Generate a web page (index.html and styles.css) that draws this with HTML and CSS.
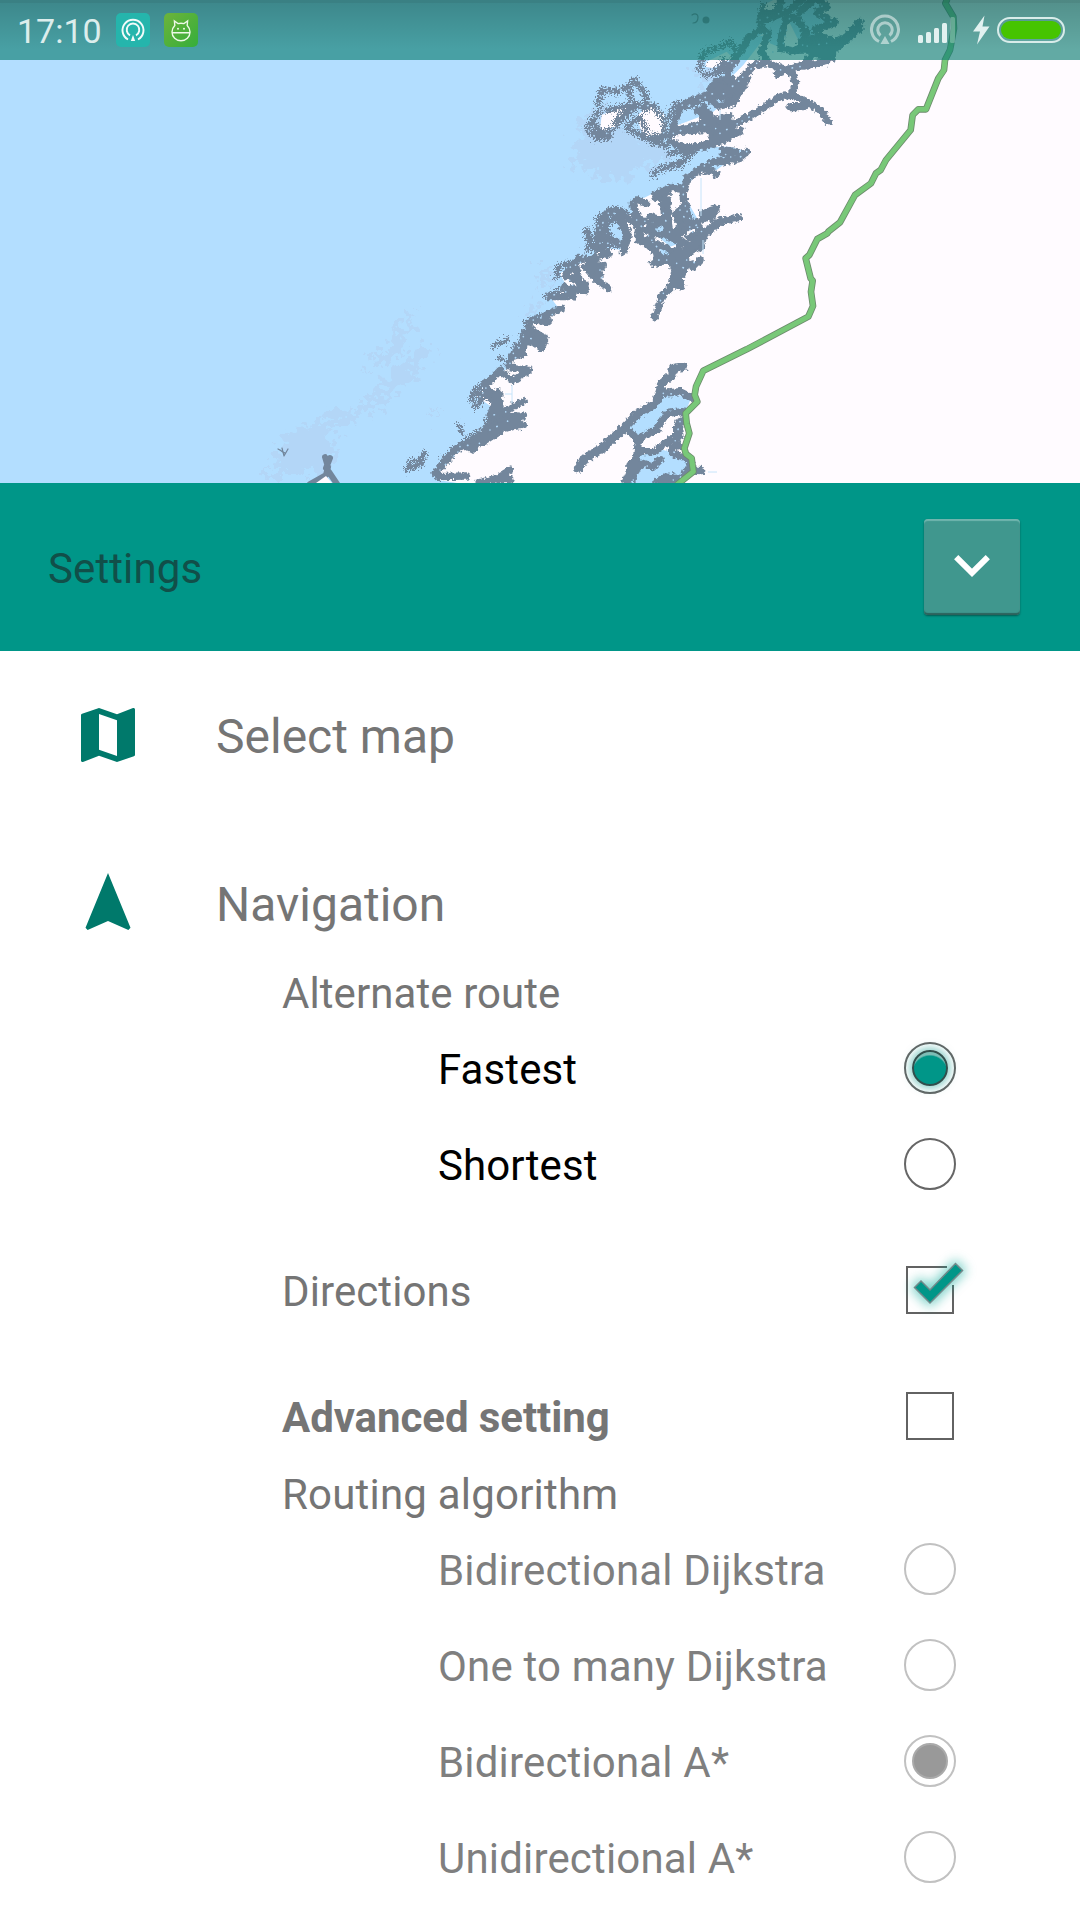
FILE: index.html
```html
<!DOCTYPE html>
<html lang="en">
<head>
<meta charset="utf-8">
<title>Settings</title>
<link rel="stylesheet" href="styles.css">
</head>
<body>
<main class="screen">
  <section class="map">
    <svg class="map-canvas" width="1080" height="483" viewBox="0 0 1080 483">
      <defs>
        <filter id="rough" x="-5%" y="-5%" width="110%" height="110%">
          <feTurbulence type="fractalNoise" baseFrequency=".1" numOctaves="2" seed="4"/>
          <feDisplacementMap in="SourceGraphic" scale="18" xChannelSelector="R" yChannelSelector="G"/>
        </filter>
        <filter id="rugged" x="-5%" y="-5%" width="110%" height="110%">
          <feTurbulence type="fractalNoise" baseFrequency=".22" numOctaves="2" seed="9"/>
          <feDisplacementMap in="SourceGraphic" scale="38" xChannelSelector="R" yChannelSelector="G"/>
        </filter>
        <filter id="wash" x="-10%" y="-10%" width="120%" height="120%">
          <feTurbulence type="fractalNoise" baseFrequency=".12" numOctaves="3" seed="3"/>
          <feDisplacementMap in="SourceGraphic" scale="38" xChannelSelector="R" yChannelSelector="G"/>
        </filter>
      </defs>
      <rect width="1080" height="483" class="sea"/>

      <!-- shallow water -->
      <g class="shoal" filter="url(#wash)">
        <path d="M262 475l14-18 12-25 22-6 20-15 22-2 18-12 20-24 14-12 22-20 6 10-14 22-20 20-20 14-30 16-18 8 8 18-10 18-24 8z"/>
        <path d="M368 372l6-20 14-6 12-18 10-14 8-4-8 20-8 22-16 10z"/>
        <path d="M572 170l10-50 20-14 30 26 34 8 4 26-30 2-20 14-22-6-12-8z"/>
        <path d="M536 276l12-10 8 6-16 14zM404 350l6-4M524 310l10-8 4 6-12 14zM430 415l8-8 2 8zM696 70l14-8 6 12-14 12z"/>
      </g>

      <!-- mainland and islands -->
      <g transform="translate(540 0) scale(.33333)">
        <path class="land" d="M1620-10H860L840 40 885 70 825 95 880 150 820 130 790 150 740 50 715 140 690 130 680 95 640 120 590 190 575 230 540 265 580 285 520 335 400 380 395 430 490 440 570 440 620 455 570 480 530 510 480 515 435 560 340 580 280 610 300 650 240 640 180 690 170 760 120 790 60 820 80 860 30 890 60 930-30 975-40 1030-75 1060-90 1100-120 1120-160 1145-190 1190-130 1230-170 1290-270 1370-315 1420-305 1440-180 1460H1620z"/>
        <path class="land" d="M180 390l5-45 100-40 10 5-60 65-40 20zM290 350l40-40 40 30 10 40-20 25-50 5zM500 185l60-30 20 20-60 30-25-5zM660 20l40-20h30l-20 30-40 20z"/>
        <path class="sea" d="M610 150l40-40 30-5-70 90-30 30-10-20zM445 540l45-70 70-28 60 12-60 30-80 30-45 25zM820-5l-60 45 50 50 10-40zM330 640l40 20 10 40 40 30-30 10-60-50zM440 600l40 70-40 20zM890 140l70-70-60 70zM180 670l60-10 20 40-20 50-60-10z"/>
      </g>
      <g transform="translate(400 200) scale(.33333)">
        <path class="sea" d="M680 690l60-60 50-50 85 10-20 50-60 5-40 60-45 20zM700 770l90-20 70 20 25 40-40 40H680zM595 90l60-25 20 50-60 15zM780 130l60 50-20 20-40-40z"/>
      </g>
      <path class="coast" d="M310 484l16-9 2-8-3-10m4 15 8 12M326 468l4-10"/>
      <path class="land" d="M316 483l10-7 6 7z"/>

      <!-- coastline, northern half -->
      <g transform="translate(540 0) scale(.33333)">
        <g class="coast" filter="url(#rough)">
          <path class="mass" d="M515 290l10-50 50-10 20 30-20 40zM765 155l50-45 70 30-5 40-60-25zM400 390l170-40-20 40-140 10zM515 370l40 10-15 25-30 30zM340 600l20-15 30-10-20 20zM400 640l40-30 10 30-20 60zM440 710l60-20-20 50z"/>
          <path d="M790-5l-40 35-50 20-40 15 12-28 40 8 12-45M780 35l50-42 30 25-30 20 55 30-60 20 10 20 45 15M960 65l-40 45-50 25M960 85l-60 50-40 30-40-20-50 5 30-50-30-45-30 0-15 50-2 40 38 8M860 170l-40-10-30 35-50 15-55-20-20-35 20-55-20-15-40 30-30 50-30 45-5 30"/>
          <path d="M860 185l-80 15-40 10-30 12M755 215l12 35-12 30M685 188l-40 5-40 40-35 40-50-20-20 40 40 25 40-10 40-70"/>
          <path d="M395 395L570 350l-30 40 90-40 90-60 40-5 80 45 25 35M540 400l60-8M750 320l40 0M400 380l20-60 40-20 80-30M470 330l60 60M490 320l20 30M540 400l-30 30-60 15-50-15M520 380l20 30M600 395l-50 25-60 20"/>
          <path d="M620 455l-30 25-40-20M570 482l-30 5-20-5-30 25 40 15M490 500l-50 35-5 30-40-3-50 22M590 455l-40-5"/>
          <path d="M430 560v40l20 60 40 40-30 45-40-25-30-20-10-60-5-45M385 600l-5 60 10 45 50-35M485 640l40-12-10 25 M480 745l15-50 50-30 50-12M280 610l10 50 60 10 15-8M300 660v60l60 15 40 20M330 680l0 30 20 30M290 600l30 10M245 640l40 30M240 655l20 60-10 40M370 610l10 90"/>
        </g>
        <g class="coast ragged" filter="url(#rugged)">
          <path d="M480 210l10-50 50-20 30-15 20 30-15 35-40 30-40 5M550 180l20 30M660 60l10-45M700 50l20-50M530 210l20-20"/>
          <path d="M175 310l10-40 50 5 30-15 10 50 45 20-5-50-30-40-20 20M180 330l-40 55 30 30 40-5M200 400l90-80M230 360l60-50M160 370l20 20M150 400l60-5M260 380l40-30 20 40M300 320l40-5 35 50-5 40-50 10-60-30M320 410l60 30 20-40M380 360l30-50 30 10 50-20M200 330l80-15M390 460l60-20M340 430l50-30"/>
          <path d="M340 525l20-20 60-10 40-40M355 510l70-25M430 460l20-10"/>
          <path d="M170 700l10-50 50-20 30 10-40 15-30 15 10 50-30 20M140 690l15 30M190 660l20 80M170 740l70-10"/>
        </g>
        <g class="speckle">
          <path d="M480 210l10-50 50-20 30-15 20 30-15 35M175 310l10-40 50 5 30-15 10 50M180 330l-40 55 30 30M200 400l90-80M300 320l40-5 35 50-5 40M380 360l30-50 30 10 100-50M340 525l20-20 60 0M620 455l-30 25-40-20-60 40M430 560v40l20 60 40 40-30 45M280 610l10 50 60 10M300 660v60l60 15M170 700l10-50 50-20M860 130l-70 10-40-90-20 80M780 200l-60 10M650 190l-50 50-60 50M400 400l80-30 60 20M540 400l90-50M680 100l20 60M860 0l-30 40 50 30M660 60l60-20 30-30"/>
        </g>
      </g>

      <!-- coastline, southern half -->
      <g transform="translate(400 200) scale(.33333)">
        <g class="coast" filter="url(#rough)">
          <path class="mass" d="M250 690l20-30 50-20 50 5-10 25-60 20-60 40-40 10zM800 170l40-20 20 50-25 60-25 0 10-50zM550 200l45 0 10 30-30 0zM385 400l50 10-10 30-40-10zM275 600l20-30 10 50zM690 800l20-40 10 40-20 40-30 5zM765 845l30-20 50 10-30 15zM825 680l10-20 10 50-20 20z"/>
          <path d="M660 45l25 60-10 35-40-20-30-10M600 90l-10 50 35 20-60 20-30-5-40 50 60 30 0 20-50-10M525 190l20 80M560 200l40 10-10 30 35 25M580 195l30 0M490 260l30 30M450 290l50 0M485 325l-50 20 10 20-50-5M390 380l-20 30 45 20 10 15 10-30-35-20M380 410l-10 30-30 20M370 460l-35 10-10 30 60 10M385 512l-45 30-40-30-30 30-15 10M260 545l0 30 20 25M270 580l30 5-30 60 40-10 60-30M290 610l10 20M370 645l-60 30-60 15M370 675l-60 10-60 40-30 0M250 700l-30 50-30-15-30 20M150 770l-45 50 10 10 85-2M230 850l60-15 40-25M290 840l40-2"/>
          <path d="M700 20l20 50-5 50 50 20 10 45 50-20 20-40-50-20-30-5M740 90l50-30-40-10M800 30l5 70M840 30l30 50-30 20M870 80l70-40 10-15-30 15M960 60l-60 60-50 60M760 190l40-10 35 10-10 60-40 40-20 60M830 210l15 50M850 180l30 20 20-20M730 120l60 60M840 170l30-30"/>
          <path class="wide" d="M850 500l-30 5-5 20-30 25-5 30-15 30-50 30-60 60-50 45-50 30-20 30M620 738l-50 30"/>
          <path d="M670 690l-20 20-50 30M680 685l20 20 15 20-5 50-20 20-5 50M790 580l50-5 40 20M850 635l-50 5-30 50-45 20-10 20M845 660l-20 60 10 20M720 755l40 0 30-20 20-15M815 740l0 20 50 15 10 35 30 2M700 810l30-20 30 10 20-20M780 840l40-10M850 830l10-20"/>
        </g>
        <g class="coast ragged" filter="url(#rugged)">
          <path d="M600 60l30-30 40 5-20 20-40 20 20 40M560 100l10 30 20 20M560 150l30-20M470 230l5-30 30-10M440 290l40-15M380 370l40-20M370 400l30-10M345 440l20-10M220 580l10-10 15 30-20 20M240 600l20-20M215 600l10-30 20-10M260 660l60-10M200 720l30-20M130 780l60-50M160 750l50-20M250 580l30 20"/>
        </g>
        <g class="coast ragged thin" filter="url(#rugged)">
          <path d="M280 440l15-10 20-5 8-8M298 475l12 5M175 675l10 20M20 810l15-30 20 5 20-30-10 35-30 15"/>
        </g>
        <g class="speckle">
          <path d="M600 90l20-50 40 0M600 130l70 0M560 150l-20 40-50 20 30 50M600 210l10 40M440 290l60-15M400 360l70-20M370 410l40 10M340 460l30-30M330 490l30-30M240 590l-10 20 30-50M260 650l60-15M270 690l60-30M180 740l60-10M120 810l60-60M800 180l-30 0M830 190l30 20M790 280l-20 50M860 180l30 10M710 60l60 80M790 40l20 60M840 30l40 70M870 90l40-30M700 840l60-60M840 665l-15 60M800 750l50 15M790 580l70 5M730 700l50-50M820 840l40-15"/>
        </g>
      </g>
      <path class="coast fine" d="M278 449l7 4m-3-5 2 8 4-7m-8 1 4 3M692 15c3-2 6-1 6 2s-1 6-5 6"/>
      <circle cx="706" cy="20" r="3.5" class="rock"/>
      <path class="grid-line" d="M701 178v38M703 240v14M512 385v18M505 394h7M720 110v10M708 472h9"/>

      <!-- route -->
      <g class="route" transform="translate(690 60) scale(.33333)">
        <path id="route" d="M772-183L766-170 790-130 792-95 780-30 765 0 762 30 745 55 708 148 685 148 668 165 662 210 588 300 572 330 558 340 543 370 495 405 450 487 415 515 412 520 382 537 358 585 347 595 362 655 368 662 363 695 369 738 355 770 170 868 40 932 18 980 14 1005 22 1025-13 1060-10 1090-2 1120-17 1165-12 1182 5 1195 10 1235-40 1275"/>
        <use href="#route" class="route-fill"/>
      </g>
    </svg>

    <header class="status-bar">
      <div class="status-left">
        <span class="clock">17:10</span>
        <svg class="app-icon" width="34" height="34" viewBox="0 0 34 34">
          <rect width="34" height="34" rx="5" fill="#25b5ac"/>
          <path d="M12 26.500A10.500 10.500 0 1 1 22 26.500M14 22.300A6.300 6.300 0 1 1 20 22.300" fill="none" stroke="#f2fbfa" stroke-width="1.900"/>
          <path d="M17 22l2.200 6h-4.400z" fill="#f2fbfa"/>
        </svg>
        <svg class="app-icon" width="34" height="34" viewBox="0 0 34 34">
          <defs><linearGradient id="leaf" x2="1" y2="1"><stop stop-color="#6db33b"/><stop offset="1" stop-color="#35ae3b"/></linearGradient></defs>
          <rect width="34" height="34" rx="5" fill="url(#leaf)"/>
          <path d="M10.800 12.500L10.400 8l3.600 2.600q3-.7 6 0L23.600 8l-.4 4.500q2.800 2.800 2.800 6.500c0 5-4 8.800-9 8.800s-9-3.800-9-8.800q0-3.700 2.800-6.500zM8 19.800h18" fill="none" stroke="#eef9e8" stroke-width="1.400"/>
          <circle cx="14" cy="15.700" r="1" fill="#eef9e8"/><circle cx="20" cy="15.700" r="1" fill="#eef9e8"/>
        </svg>
      </div>
      <svg class="status-right" width="200" height="34" viewBox="0 0 200 34">
        <g opacity=".5"><path d="M9 28.500A13.500 13.500 0 1 1 21 28.500M10.500 22.500A7.200 7.200 0 1 1 19.500 22.500" fill="none" stroke="#fff" stroke-width="3"/><path d="M15 23l4.500 8h-9z" fill="#fff"/></g>
        <g fill="#e2f1f0"><rect x="48" y="22" width="5" height="8" rx="1.500"/><rect x="56" y="19" width="5" height="11" rx="1.500"/><rect x="64" y="15" width="5" height="15" rx="1.500"/><rect x="72" y="10" width="5" height="20" rx="1.500"/><rect x="80" y="4" width="5" height="26" rx="1.500" opacity=".3"/><path d="M114.500 2.500l-11.500 16h7l-3 13 12.500-18h-7z"/></g>
        <rect x="128" y="5" width="66" height="24" rx="12" fill="none" stroke="#d9ecea" stroke-width="2"/>
        <rect x="131" y="8" width="60" height="18" rx="9" fill="#46c400"/>
      </svg>
    </header>
  </section>

  <section class="title-bar">
    <h1 class="title">Settings</h1>
    <button class="collapse" aria-label="Collapse">
      <svg width="36" height="22" viewBox="0 0 36 22"><path d="M2.200 2.200L18 17.800 33.800 2.200" fill="none" stroke="#fff" stroke-width="6"/></svg>
    </button>
  </section>

  <section class="settings">
    <div class="entry">
      <svg class="entry-icon" width="72" height="72" viewBox="0 0 24 24"><path d="M20.500 3l-.16.03L15 5.100 9 3 3.360 4.900c-.21.070-.36.250-.36.480V20.500c0 .28.220.5.500.5l.16-.03L9 18.900l6 2.100 5.640-1.900c.21-.07.360-.25.360-.48V3.500c0-.28-.22-.5-.5-.5zM15 19l-6-2.110V5l6 2.110V19z"/></svg>
      <span class="entry-label">Select map</span>
    </div>
    <div class="entry entry-nav">
      <svg class="entry-icon" width="72" height="72" viewBox="0 0 24 24"><path d="M12 2L4.500 20.290l.71.710L12 18l6.790 3 .71-.71z"/></svg>
      <span class="entry-label">Navigation</span>
    </div>

    <div class="caption">Alternate route</div>
    <div class="option"><span class="option-label">Fastest</span><span class="radio radio-on"></span></div>
    <div class="option"><span class="option-label">Shortest</span><span class="radio"></span></div>

    <div class="toggle directions">
      <span class="toggle-label">Directions</span>
      <svg class="check" width="96" height="96" viewBox="0 0 96 96">
        <defs><filter id="glow" x="-50%" y="-50%" width="200%" height="200%"><feGaussianBlur stdDeviation="6"/></filter></defs>
        <path d="M65 25H25v46h46V43" fill="none" stroke="#626262" stroke-width="2"/>
        <path d="M32.500 45.500l6.500-6.500 9 9L73.500 21.500l7 7L48 61z" fill="#00a896" stroke="#00a896" stroke-width="6" opacity=".55" filter="url(#glow)"/>
        <path d="M32.500 45.500l6.500-6.500 9 9L73.500 21.500l7 7L48 61z" fill="#009688" stroke="#72898a" stroke-width="1.500"/>
      </svg>
    </div>
    <div class="toggle advanced">
      <span class="toggle-label strong">Advanced setting</span>
      <span class="box"></span>
    </div>

    <div class="caption caption-wide">Routing algorithm</div>
    <div class="option disabled"><span class="option-label">Bidirectional Dijkstra</span><span class="radio"></span></div>
    <div class="option disabled"><span class="option-label">One to many Dijkstra</span><span class="radio"></span></div>
    <div class="option disabled"><span class="option-label">Bidirectional A*</span><span class="radio radio-on"></span></div>
    <div class="option disabled"><span class="option-label">Unidirectional A*</span><span class="radio"></span></div>
  </section>
</main>
</body>
</html>
```

FILE: styles.css
```css
* { box-sizing: border-box; }

body {
  margin: 0;
  background: #fff;
  font-family: Roboto, "Liberation Sans", sans-serif;
  font-size: 42px;
  color: #757575;
}

.screen {
  display: flex;
  flex-direction: column;
  width: 1080px;
  height: 1920px;
  overflow: hidden;
}

/* Map */
.map { position: relative; height: 483px; flex: none; }
.map-canvas { display: block; }
.sea { fill: #b3deff; }
.land { fill: #fffbff; }
.shoal { fill: #b3d5f6; opacity: .8; }
.coast {
  fill: none;
  stroke: #73869c;
  stroke-width: 22;
  stroke-linecap: round;
  stroke-linejoin: round;
}
.mass { fill: #73869c; stroke-width: 12; }
.wide { stroke-width: 27; }
.ragged { stroke-width: 17; }
.thin { stroke-width: 13; }
.map-canvas > .coast { stroke-width: 6; }
.map-canvas > .fine { stroke-width: 1.2; }
.rock { fill: #73869c; }
.speckle {
  fill: none;
  stroke: #b3d9f8;
  stroke-width: 5;
  stroke-linecap: round;
  stroke-dasharray: 0 23 1 35 0 17;
}
.grid-line { stroke: #c6e4fa; stroke-width: 1; fill: none; }
.route { fill: none; stroke: #6d8b6d; stroke-width: 20; stroke-linejoin: round; }
.route-fill { stroke: #78c878; stroke-width: 15; }

/* Status bar */
.status-bar {
  position: absolute;
  inset: 0 0 auto 0;
  height: 60px;
  padding: 0 10px 0 17px;
  display: flex;
  justify-content: space-between;
  align-items: center;
  background:
    linear-gradient(rgba(0, 0, 0, .2) 0 3px, rgba(0, 0, 0, .15) 3px, rgba(0, 0, 0, 0) 50px),
    rgba(17, 128, 117, .66);
}
.status-left { display: flex; align-items: center; }
.clock {
  width: 99px;
  padding-top: 2px;
  font-size: 34px;
  line-height: 58px;
  color: #dcedec;
}
.app-icon { margin-right: 14px; }

/* Title bar */
.title-bar {
  flex: none;
  height: 168px;
  padding: 0 60px 0 48px;
  display: flex;
  align-items: center;
  justify-content: space-between;
  background: #009688;
}
.title { margin: 3px 0 0; font-size: 42px; font-weight: 400; letter-spacing: .1px; color: #114f49; }
.collapse {
  width: 96px;
  height: 96px;
  padding: 0 0 3px;
  display: flex;
  align-items: center;
  justify-content: center;
  border: 0;
  border-radius: 4px;
  background: #40978e;
  box-shadow: inset 0 2px 1px #70b5ae, inset 0 -2px 1px #2c625c, 0 1px 2px rgba(0, 0, 0, .4);
}

/* Settings list */
.entry {
  display: flex;
  align-items: center;
  height: 168px;
  padding-left: 72px;
}
.entry-nav { height: 147px; padding-top: 21px; }
.entry-icon { fill: #00796b; flex: none; }
.entry-label { margin-left: 72px; font-size: 48px; line-height: 56px; padding-top: 4px; }

.caption { height: 54px; line-height: 56px; padding-left: 282px; letter-spacing: .08px; }
.caption-wide { letter-spacing: .2px; }

.option {
  display: flex;
  align-items: center;
  justify-content: space-between;
  height: 96px;
  padding: 0 124px 0 438px;
  color: #000;
}
.option-label { padding-top: 2px; letter-spacing: .1px; }
.disabled { color: #7f7f7f; }
.disabled .option-label { letter-spacing: .17px; }

.radio {
  width: 52px;
  height: 52px;
  border: 2px solid #666;
  border-radius: 50%;
  display: grid;
  place-items: center;
}
.radio-on::after {
  content: "";
  width: 32px;
  height: 32px;
  border: 2px solid #30504d;
  border-radius: 50%;
  background: radial-gradient(circle at 50% 66%, #009688 64%, #7dbdb6 70%);
  box-shadow: 0 0 9px 2px rgba(0, 150, 136, .5);
}
.disabled .radio { border-color: #c1c1c1; }
.disabled .radio-on::after { border-color: #aaa; background: #999; box-shadow: none; }

.toggle {
  display: flex;
  align-items: center;
  justify-content: space-between;
  padding: 0 126px 0 282px;
}
.toggle-label { padding-top: 2px; letter-spacing: .1px; }
.directions { height: 126px; margin-top: 15px; }
.check { margin-right: -24px; }
.advanced { height: 114px; padding-top: 12px; }
.strong { font-weight: 700; letter-spacing: -.07px; }
.box { width: 48px; height: 48px; border: 2px solid #626262; }
```
